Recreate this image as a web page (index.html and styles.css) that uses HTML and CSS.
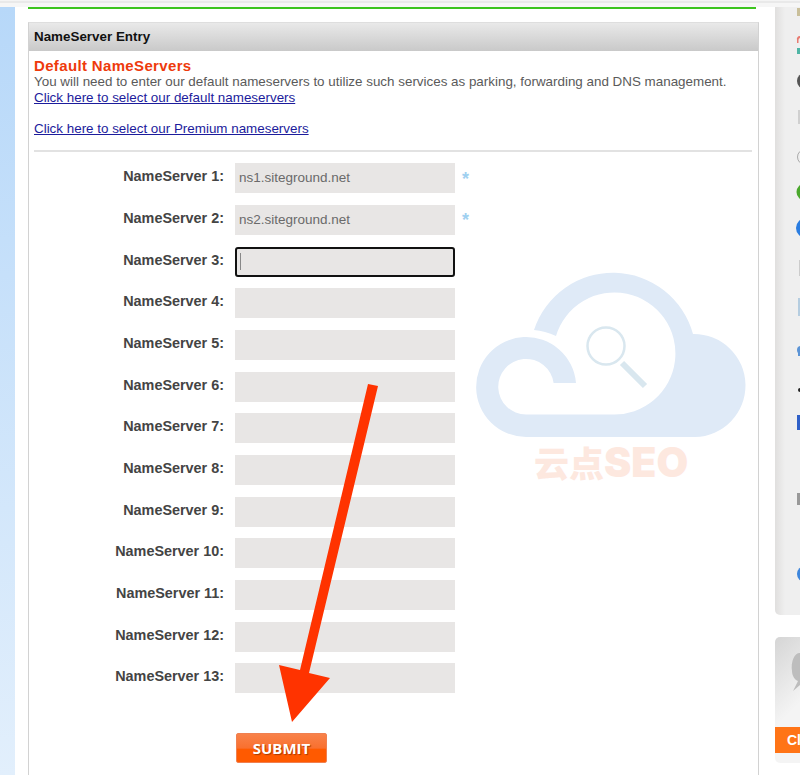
FILE: index.html
```html
<!DOCTYPE html>
<html lang="en">
<head>
<meta charset="utf-8">
<title>NameServer Entry</title>
<link rel="stylesheet" href="styles.css">
</head>
<body>
<div class="topline"></div>
<div class="layout">
  <div class="leftstrip"></div>
  <main class="main">
    <div class="greenline"></div>
    <section class="panel">
      <h2 class="panel-head">NameServer Entry</h2>
      <div class="panel-body">
        <h3 class="title">Default NameServers</h3>
        <p class="line">You will need to enter our default nameservers to utilize such services as parking, forwarding and DNS management.</p>
        <p class="line"><a href="#">Click here to select our default nameservers</a></p>
        <p class="line">&nbsp;</p>
        <p class="line"><a href="#">Click here to select our Premium nameservers</a></p>
        <div class="rule"></div>
        <form class="rows">
          <label class="lab">NameServer 1:</label><div class="field">ns1.siteground.net</div><span class="req">*</span>
          <label class="lab">NameServer 2:</label><div class="field">ns2.siteground.net</div><span class="req">*</span>
          <label class="lab">NameServer 3:</label><div class="field focus"><span class="caret"></span></div><span></span>
          <label class="lab">NameServer 4:</label><div class="field"></div><span></span>
          <label class="lab">NameServer 5:</label><div class="field"></div><span></span>
          <label class="lab">NameServer 6:</label><div class="field"></div><span></span>
          <label class="lab">NameServer 7:</label><div class="field"></div><span></span>
          <label class="lab">NameServer 8:</label><div class="field"></div><span></span>
          <label class="lab">NameServer 9:</label><div class="field"></div><span></span>
          <label class="lab">NameServer 10:</label><div class="field"></div><span></span>
          <label class="lab">NameServer 11:</label><div class="field"></div><span></span>
          <label class="lab">NameServer 12:</label><div class="field"></div><span></span>
          <label class="lab">NameServer 13:</label><div class="field"></div><span></span>
        </form>
        <div class="submit-row"><button type="button" class="submit">SUBMIT</button></div>
      </div>
    </section>
  </main>
  <aside class="side">
    <div class="side-box">
      <svg class="side-icons" width="25" height="600" viewBox="775 7 25 600" aria-hidden="true">
        <rect x="797" y="8" width="3" height="8" fill="#c9bf9a"/>
        <path d="M800 36a3 3 0 0 0-3 4v3h1.500v-3a2 2 0 0 1 1.500-2z" fill="#e87a70"/>
        <rect x="797" y="48" width="3" height="6" fill="#4fb5a5"/>
        <circle cx="805" cy="81" r="8" fill="#555"/>
        <rect x="798" y="110" width="2" height="14" fill="#d0d0d0"/>
        <circle cx="805" cy="157" r="7.500" fill="none" stroke="#aaa" stroke-width="1"/>
        <circle cx="805" cy="192" r="8.500" fill="#4aa82c"/>
        <circle cx="806" cy="228" r="10" fill="#2a7de1"/>
        <rect x="799" y="260" width="1" height="16" fill="#ccc"/>
        <rect x="798" y="298" width="2" height="18" fill="#b5cde0"/>
        <circle cx="801" cy="350" r="4" fill="#5b94d6"/>
        <rect x="798" y="350" width="2" height="6" fill="#5b94d6"/>
        <circle cx="800" cy="390" r="2" fill="#222"/>
        <rect x="797" y="415" width="3" height="15" fill="#2f60c8"/>
        <rect x="797" y="493" width="3" height="12" fill="#999"/>
        <circle cx="805" cy="574" r="8" fill="#3d86dc"/>
      </svg>
    </div>
    <div class="chat-box">
      <svg class="chat-icon" width="25" height="60" viewBox="775 645 25 60" aria-hidden="true">
        <path d="M800 654a8 14 0 0 0-8 18c0 5 3 9 6 10l-5 10 7-6 0-1h0z" fill="#bdbdbd"/>
      </svg>
      <div class="chat-bar">Click</div>
    </div>
  </aside>
</div>
<svg class="overlay" width="800" height="775" viewBox="0 0 800 775" aria-hidden="true">
  <path d="M534 330A83 83 0 0 1 693 334A51.500 51.500 0 0 1 695 437L526 437A50 50 0 1 1 576 383L553.600 383A27.800 27.800 0 1 0 526 414.500L612 414.500A61 61 0 1 0 556 336Q545 331 534 330Z" fill="#dfeaf7"/>
  <circle cx="606" cy="346" r="18.500" fill="none" stroke="#d9e7ef" stroke-width="2.500"/>
  <path d="M622 363L645 386" stroke="#d9e7ef" stroke-width="6"/>
  <text class="wm" x="534" y="477"><tspan class="wm-cjk">云点</tspan>SEO</text>
  <path d="M368 384L378 386L309 673L330 678L292 722L279 665L300 670Z" fill="#ff3300"/>
</svg>
</body>
</html>
```
FILE: styles.css
```css
* { box-sizing: border-box; }
html, body { margin: 0; padding: 0; }
body {
  width: 800px;
  height: 775px;
  overflow: hidden;
  position: relative;
  background: #fff;
  font-family: "Liberation Sans", Arial, sans-serif;
  color: #555;
}
.topline {
  height: 7px;
  border-top: 1px solid #f4f4f4;
  background: linear-gradient(#e9e9e9 0, #e9e9e9 2px, #f6f6f6 2px, #f6f6f6 100%);
}
.layout { display: flex; height: 768px; }
.leftstrip {
  width: 15px;
  flex: none;
  background: linear-gradient(#b7d8f9, #e2effc);
}
.main { width: 731px; margin-left: 13px; flex: none; }
.greenline { width: 728px; height: 2px; background: #3cc41e; }
.panel {
  margin-top: 13px;
  height: 780px;
  border: 1px solid #d2d2d2;
  border-top-color: #dedede;
}
.panel-head {
  margin: 0;
  height: 28px;
  padding-left: 5px;
  font-size: 13.400px;
  line-height: 27px;
  font-weight: bold;
  color: #111;
  background: linear-gradient(#e9e9e9, #c9c9c9);
}
.panel-body { padding: 7px 6px 0 5px; }
.title {
  margin: 0;
  font-size: 15px;
  letter-spacing: 0.350px;
  line-height: 16px;
  font-weight: bold;
  color: #ee3a0c;
}
.line { margin: 0; font-size: 13.400px; line-height: 15.500px; color: #5a5a5a; }
.line a { color: #1c1c9c; text-decoration: underline; }
.rule { height: 2px; margin-top: 14px; background: #e2e2e2; }
.rows {
  display: grid;
  grid-template-columns: 190px 220px 1fr;
  column-gap: 11px;
  row-gap: 11.670px;
  margin-top: 11.330px;
  align-items: center;
}
.lab { text-align: right; font-size: 14.400px; font-weight: bold; color: #444; padding-bottom: 4px; }
.field {
  height: 30px;
  padding-left: 4px;
  background: #e8e6e5;
  font-size: 13.500px;
  line-height: 30px;
  color: #6a6a6a;
}
.focus {
  border: 2px solid #111;
  border-radius: 3px;
  padding-left: 3px;
  display: flex;
  align-items: center;
}
.caret { width: 1px; height: 17px; background: #888; }
.req { color: #9fd0f0; font-size: 18px; line-height: 18px; font-weight: bold; margin-left: -4px; padding-top: 1px; }
.submit-row { margin-top: 39.670px; padding-left: 202px; }
.submit {
  display: block;
  width: 91px;
  height: 30px;
  padding: 0;
  border: 1px solid #f08050;
  border-radius: 2px;
  background: linear-gradient(#f8824a 0, #f9702f 50%, #ff5a00 55%, #ff5a00 100%);
  font-family: "Open Sans", sans-serif;
  font-size: 15px;
  font-weight: bold;
  color: #fff;
  text-shadow: 1px 1px 1px #a83a00;
}
.side { width: 25px; margin-left: 16px; flex: none; }
.side-box {
  height: 608px;
  border-radius: 0 0 0 5px;
  background: linear-gradient(90deg, #e0dfde, #efefef 10px);
}
.side-icons { display: block; }
.chat-box {
  margin-top: 22px;
  height: 126px;
  border-radius: 5px 0 0 5px;
  overflow: hidden;
  background: linear-gradient(135deg, #d5d5d5, #f4f4f4 60%);
  padding-top: 7px;
}
.chat-icon { display: block; }
.chat-bar {
  margin-top: 23px;
  height: 26px;
  padding-left: 12px;
  background: #ff7416;
  font-size: 14px;
  line-height: 26px;
  font-weight: bold;
  color: #fff;
}
.overlay { position: absolute; left: 0; top: 0; pointer-events: none; }
.wm {
  font-family: Inter, "Liberation Sans", sans-serif;
  font-size: 41px;
  font-weight: 900;
  fill: #fde8df;
}
.wm-cjk { font-family: "Noto Sans CJK SC", sans-serif; font-size: 35px; font-weight: 900; }
```
